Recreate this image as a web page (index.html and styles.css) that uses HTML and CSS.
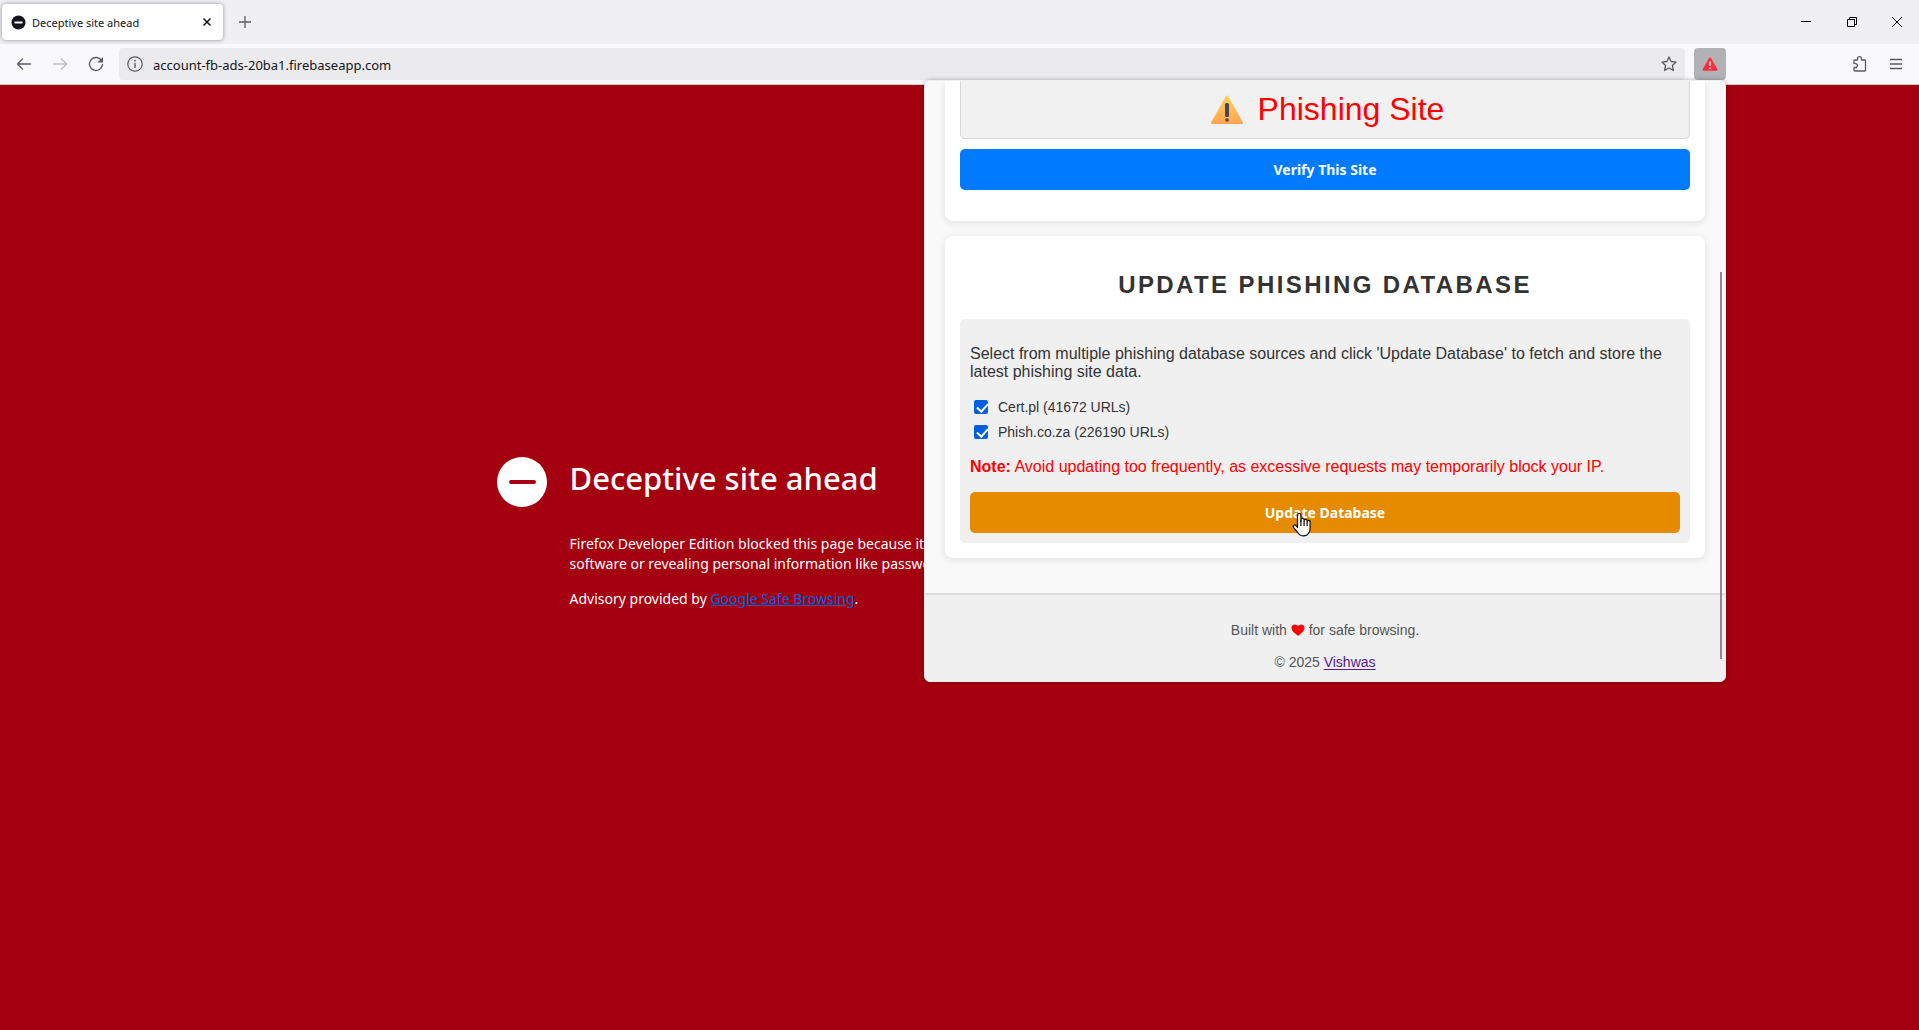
FILE: index.html
```html
<!DOCTYPE html>
<html lang="en">
<head>
<meta charset="utf-8">
<title>Deceptive site ahead</title>
<link rel="stylesheet" href="styles.css">
</head>
<body>
<div class="browser">
  <header class="tabbar">
    <div class="tab">
      <svg class="tab-icon" viewBox="0 0 16 16"><circle cx="8" cy="8" r="7.5" fill="#15141a"/><rect x="3.5" y="7" width="9" height="2" rx="1" fill="#fff"/></svg>
      <span class="tab-title">Deceptive site ahead</span>
      <button class="tab-close" aria-label="Close tab"><svg width="10" height="10" viewBox="0 0 10 10"><path d="M1.5 1.5l7 7M8.5 1.5l-7 7" stroke="#15141a" stroke-width="1.5"/></svg></button>
    </div>
    <button class="icon-btn" aria-label="New tab"><svg width="14" height="14" viewBox="0 0 14 14"><path d="M7 1v12M1 7h12" stroke="#5b5b66" stroke-width="1.3"/></svg></button>
    <div class="window-controls">
      <button class="win-btn" aria-label="Minimize"><svg width="10" height="10" viewBox="0 0 10 10"><path d="M0 4.5h10" stroke="#000"/></svg></button>
      <button class="win-btn" aria-label="Restore"><svg width="10" height="10" viewBox="0 0 10 10" fill="none" stroke="#000"><path d="M.5 2.5h7v7h-7zM2.500 2.500v-2h7v7h-2"/></svg></button>
      <button class="win-btn" aria-label="Close"><svg width="10" height="10" viewBox="0 0 10 10"><path d="M0 0l10 10M10 0L0 10" stroke="#000"/></svg></button>
    </div>
  </header>

  <nav class="toolbar">
    <button class="nav-btn" aria-label="Back"><svg width="16" height="16" viewBox="0 0 16 16" fill="none" stroke="#5b5b66" stroke-width="1.4" stroke-linecap="round" stroke-linejoin="round"><path d="M6.500 3L1.500 8l5 5M1.500 8h13"/></svg></button>
    <button class="nav-btn" aria-label="Forward" disabled><svg width="16" height="16" viewBox="0 0 16 16" fill="none" stroke="#bebec3" stroke-width="1.4" stroke-linecap="round" stroke-linejoin="round"><path d="M9.500 3l5 5-5 5M14.500 8h-13"/></svg></button>
    <button class="nav-btn" aria-label="Reload"><svg width="16" height="16" viewBox="0 0 16 16"><path d="M13.600 4.600A6.500 6.500 0 1 0 14.500 8.500" fill="none" stroke="#5b5b66" stroke-width="1.4" stroke-linecap="round"/><path d="M15 1v5.500H9.500z" fill="#5b5b66"/></svg></button>
    <div class="urlbar">
      <svg width="16" height="16" viewBox="0 0 16 16"><circle cx="8" cy="8" r="7.200" fill="none" stroke="#5b5b66" stroke-width="1.200"/><path d="M8 7v5" stroke="#5b5b66" stroke-width="1.400"/><circle cx="8" cy="4.700" r=".9" fill="#5b5b66"/></svg>
      <input class="url-input" type="text" aria-label="Address" value="account-fb-ads-20ba1.firebaseapp.com">
      <button class="star-btn" aria-label="Bookmark this page"><svg width="16" height="16" viewBox="0 0 16 16"><path d="M8 .9l2.100 4.600 5 .6-3.700 3.400 1 5L8 12l-4.400 2.500 1-5L.9 6.100l5-.6z" fill="none" stroke="#5b5b66" stroke-width="1.300" stroke-linejoin="round"/></svg></button>
    </div>
    <button class="ext-btn" aria-label="Phishing detector"><svg width="16" height="16" viewBox="0 0 16 16"><path d="M8 1.500c.5 0 .8.200 1 .6l6.300 11.200c.4.700 0 1.500-.9 1.500H1.600c-.9 0-1.300-.8-.9-1.500L7 2.100c.2-.4.500-.6 1-.6z" fill="#fc2d3d"/><path d="M8 5.500v4.500" stroke="#f6d3d6" stroke-width="1.800"/><circle cx="8" cy="12.300" r="1" fill="#f6d3d6"/></svg></button>
    <div class="toolbar-end">
      <button class="nav-btn" aria-label="Extensions"><svg width="16" height="16" viewBox="0 0 16 16"><path d="M2 6V4.800c0-.5.400-.8.800-.8H5.500V2.700a2 2 0 0 1 4 0V4h3.200c.5 0 .8.400.8.800v9.400c0 .5-.3.800-.8.800H2.800c-.4 0-.8-.3-.8-.8V11.500h1.500a1.900 1.900 0 0 0 0-3.800H2z" fill="none" stroke="#5b5b66" stroke-width="1.300" stroke-linejoin="round"/></svg></button>
      <button class="nav-btn" aria-label="Open application menu"><svg width="14" height="16" viewBox="0 0 14 16"><path d="M1 3.500h12M1 8h12M1 12.500h12" stroke="#5b5b66" stroke-width="1.400"/></svg></button>
    </div>
  </nav>

  <main class="warning-page">
    <div class="warning">
      <svg class="warning-icon" viewBox="0 0 50 50"><circle cx="25" cy="25" r="25" fill="#fff"/><rect x="12" y="23" width="27" height="4" rx="2" fill="#a4000f"/></svg>
      <h1>Deceptive site ahead</h1>
      <p>Firefox Developer Edition blocked this page because it may trick you into doing something dangerous like installing software or revealing personal information like passwords or credit cards.</p>
      <p>Advisory provided by <a href="#">Google Safe Browsing</a>.</p>
    </div>
  </main>

  <aside class="popup">
    <div class="popup-body">
      <section class="card card-result">
        <div class="result">
          <svg width="34" height="32" viewBox="0 0 34 32"><defs><linearGradient id="amber" x1="0" y1="0" x2="0" y2="1"><stop offset="0" stop-color="#ffd05a"/><stop offset="1" stop-color="#ffa552"/></linearGradient></defs><path d="M15.800 3.300c.5-1 1.900-1 2.400 0l14.600 26c.5.900 0 1.700-1 1.700H2.200c-1 0-1.500-.8-1-1.700z" fill="url(#amber)"/><rect x="15" y="10" width="4" height="14" rx="1.500" fill="#4c4450"/><circle cx="17" cy="27" r="1.800" fill="#4c4450"/></svg>
          <span>Phishing Site</span>
        </div>
        <button class="btn btn-verify">Verify This Site</button>
      </section>

      <section class="card card-update">
        <h2>UPDATE PHISHING DATABASE</h2>
        <div class="sources">
          <p>Select from multiple phishing database sources and click 'Update Database' to fetch and store the latest phishing site data.</p>
          <div class="source-list">
            <label class="source"><input type="checkbox" checked>Cert.pl (41672 URLs)</label>
            <label class="source"><input type="checkbox" checked>Phish.co.za (226190 URLs)</label>
          </div>
          <p class="note"><strong>Note:</strong> Avoid updating too frequently, as excessive requests may temporarily block your IP.</p>
          <button class="btn btn-update">Update Database
            <svg class="cursor" width="20" height="26" viewBox="0 0 20 26"><path d="M5.500 15.500V3a1.700 1.700 0 0 1 3.400 0v6.300V7.800a1.600 1.600 0 0 1 3.200.2v1.300-.5a1.500 1.500 0 0 1 3 .2v1-.2a1.500 1.500 0 0 1 3 .2v6.500c0 2-.6 3.200-1.400 4.500-.9 1.600-2.700 2.900-5.200 2.900-3 0-4.600-1.400-5.800-3.400L1.600 15.600c-.6-1.200-.3-2 .4-2.400 1-.5 1.900 0 2.500.9z" fill="#fff" stroke="#111" stroke-width="1.200" stroke-linejoin="round"/><path d="M8.900 8v6M12.100 9v5M15.100 10v4" stroke="#111" stroke-width="1.200"/></svg>
          </button>
        </div>
      </section>
    </div>

    <footer class="popup-footer">
      <p>Built with <svg class="heart" width="14" height="12" viewBox="0 0 14 12"><path d="M7 11.800C4 9.400.5 7 .5 3.700.5 1.700 2 .4 3.800.4 5.200.4 6.300 1.100 7 2.300 7.700 1.100 8.800.4 10.200.4c1.800 0 3.300 1.300 3.300 3.300C13.500 7 10 9.400 7 11.800z" fill="#f00"/></svg> for safe browsing.</p>
      <p>© 2025 <a href="#">Vishwas</a></p>
    </footer>
    <div class="scroll-thumb"></div>
  </aside>
</div>
</body>
</html>
```
FILE: styles.css
```css
* {
  box-sizing: border-box;
}

body {
  margin: 0;
  font-family: "Noto Sans", "Open Sans", sans-serif;
  color: #15141a;
}

button {
  margin: 0;
  padding: 0;
  border: 0;
  background: none;
  font: inherit;
  color: inherit;
}

svg {
  display: block;
  flex: none;
}

.browser {
  position: relative;
  display: flex;
  flex-direction: column;
  min-height: 100vh;
  overflow: hidden;
}

/* Tab strip */
.tabbar {
  display: flex;
  align-items: center;
  height: 44px;
  padding-left: 2px;
  background: #f0f0f4;
}

.tab {
  display: flex;
  align-items: center;
  gap: 6px;
  width: 221px;
  height: 36px;
  padding: 0 8px 0 9px;
  border-radius: 4px;
  background: #fff;
  box-shadow: 0 0 4px rgba(0, 0, 0, 0.4);
}

.tab-icon {
  width: 15px;
  height: 15px;
}

.tab-title {
  flex: 1;
  padding-top: 2px;
  font-size: 11px;
  line-height: 16px;
}

.tab-close,
.icon-btn,
.nav-btn,
.win-btn {
  display: flex;
  align-items: center;
  justify-content: center;
}

.tab-close {
  width: 16px;
  height: 16px;
}

.icon-btn {
  width: 44px;
  height: 36px;
}

.window-controls {
  display: flex;
  margin-left: auto;
}

.win-btn {
  width: 46px;
  height: 44px;
}

.win-btn:last-child {
  width: 44px;
}

/* Navigation toolbar */
.toolbar {
  display: flex;
  align-items: center;
  height: 41px;
  padding: 0 5px 0 6px;
  border-bottom: 1px solid #ccc;
  background: #f9f9fb;
}

.nav-btn {
  width: 36px;
  height: 32px;
}

.urlbar {
  display: flex;
  align-items: center;
  flex: 1;
  gap: 10px;
  height: 32px;
  margin-left: 5px;
  padding: 0 8px;
  border-radius: 4px;
  background: #ebebed;
}

.url-input {
  flex: 1;
  min-width: 0;
  padding: 2px 0 0;
  border: 0;
  background: none;
  color: #15141a;
  font: 13px/20px "Noto Sans", "Open Sans", sans-serif;
  outline: 0;
}

.ext-btn {
  display: flex;
  align-items: center;
  justify-content: center;
  width: 32px;
  height: 32px;
  margin-left: 9px;
  border-radius: 4px;
  background: #b2b2b4;
}

.toolbar-end {
  display: flex;
  justify-content: flex-end;
  width: 188px;
}

/* Blocked page */
.warning-page {
  flex: 1;
  padding: 372px 24px 24px;
  background: #a4000f;
  color: #fff;
}

.warning {
  position: relative;
  max-width: 780px;
  margin: 0 auto;
  font-size: 14px;
  line-height: 20px;
}

.warning-icon {
  position: absolute;
  top: 0;
  right: 100%;
  width: 50px;
  height: 50px;
  margin-right: 23px;
}

.warning h1 {
  margin: 0 0 35px;
  font-size: 31px;
  font-weight: 500;
  line-height: 42px;
}

.warning p {
  margin: 0 0 15px;
}

.warning a {
  color: #0060df;
}

/* Extension popup */
.popup {
  position: absolute;
  top: 80px;
  right: 193px;
  width: 802px;
  border: 1px solid #f0f0f4;
  border-radius: 6px;
  overflow: hidden;
  background: #f9f9f9;
  box-shadow: 0 0 4px rgba(0, 0, 0, 0.3);
  color: #333;
  font: 16px/18px "Liberation Sans", Arial, sans-serif;
}

.popup-body {
  display: flex;
  flex-direction: column;
  gap: 15px;
  padding: 0 20px 35px;
}

.card {
  padding: 15px;
  border-radius: 8px;
  background: #fff;
  box-shadow: 0 2px 8px rgba(0, 0, 0, 0.1);
}

.card-result {
  padding: 0 15px 31px;
  border-radius: 0 0 8px 8px;
}

.result {
  display: flex;
  align-items: center;
  justify-content: center;
  gap: 14px;
  height: 58px;
  margin-bottom: 10px;
  padding: 0 0 2px 4px;
  border: 1px solid #d8d8d8;
  border-top: 0;
  border-radius: 0 0 5px 5px;
  background: #f1f1f1;
  color: #f00;
  font-size: 32px;
  line-height: 36px;
}

.btn {
  display: block;
  position: relative;
  width: 100%;
  height: 41px;
  border-radius: 5px;
  color: #fff;
  font: bold 14px/20px "Noto Sans", "Open Sans", sans-serif;
}

.btn-verify {
  background: #007bff;
}

.btn-update {
  background: #e68a00;
}

.card h2 {
  margin: 20px 0;
  font-size: 24px;
  line-height: 28px;
  letter-spacing: 0.1em;
  text-align: center;
}

.sources {
  padding: 26px 10px 10px;
  border-radius: 5px;
  background: #f0f0f0;
}

.sources p {
  margin: 0;
}

.source-list {
  display: flex;
  flex-direction: column;
  gap: 5px;
  margin: 16px 0;
}

.source {
  display: flex;
  align-items: center;
  gap: 10px;
  padding-left: 4px;
  font-size: 14px;
  line-height: 20px;
}

.source input {
  appearance: none;
  width: 14px;
  height: 14px;
  margin: 0;
  border-radius: 2px;
  background: #0060df;
}

.source input::before {
  content: "";
  display: block;
  width: 5px;
  height: 9px;
  margin: 1px 0 0 5px;
  border: solid #fff;
  border-width: 0 2px 2px 0;
  transform: rotate(42deg);
}

.sources .note {
  margin-bottom: 16px;
  color: #f00;
}

.cursor {
  position: absolute;
  top: 20px;
  left: calc(50% - 33px);
}

.popup-footer {
  display: flex;
  flex-direction: column;
  gap: 16px;
  padding: 27px 10px 11px;
  border-top: 2px solid #ddd;
  background: #f0f0f0;
  color: #555;
  font-size: 14px;
  line-height: 16px;
  text-align: center;
}

.popup-footer p {
  margin: 0;
}

.popup-footer a {
  color: #551a8b;
  text-underline-offset: 2px;
}

.heart {
  display: inline-block;
  vertical-align: -1px;
}

.scroll-thumb {
  position: absolute;
  top: 191px;
  right: 3px;
  bottom: 22px;
  width: 2px;
  background: #8a8a8a;
}
```
